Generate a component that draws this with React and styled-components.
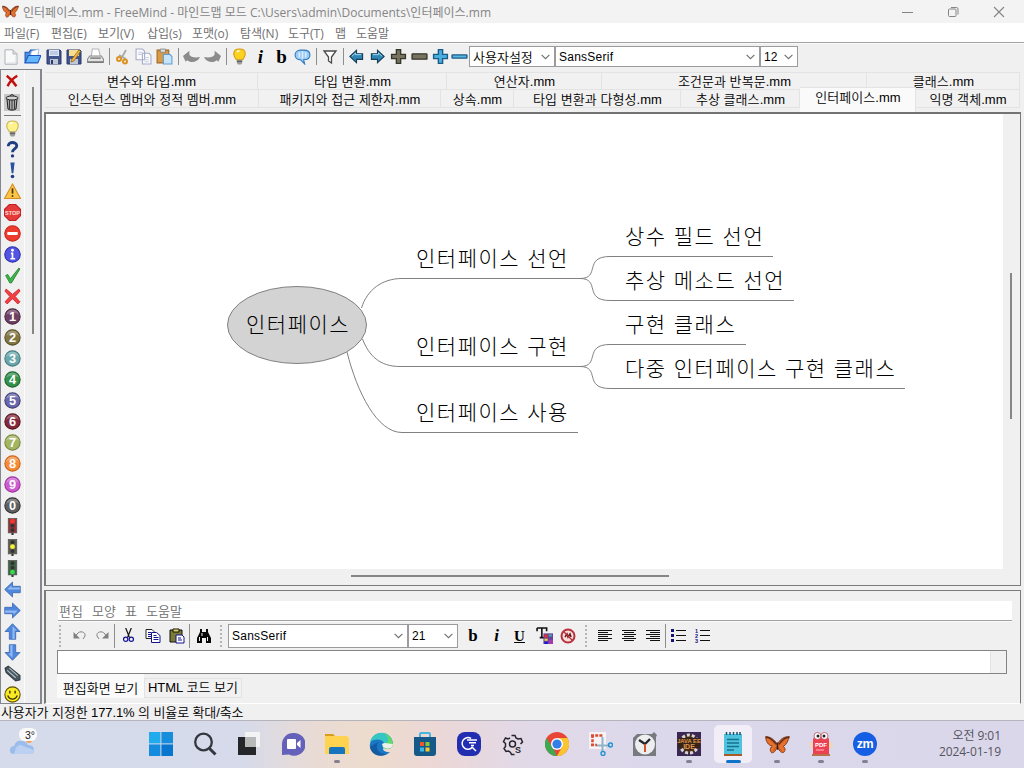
import React from "react";
import styled, { createGlobalStyle } from "styled-components";

const Global = createGlobalStyle`
  * { box-sizing: border-box; }
  html, body { margin: 0; padding: 0; overflow: hidden; }
  body { font-family: "Liberation Sans", "Noto Sans CJK KR", sans-serif; font-size: 12px; font-weight: 350; color: #000; }
  svg { display: block; flex: none; }
`;

const Window = styled.div`
  width: 1024px; height: 768px; display: flex; flex-direction: column;
  background: #f0f0f0; overflow: hidden; white-space: nowrap;
`;
const TitleBar = styled.header`
  height: 23px; flex: none; display: flex; align-items: center; background: #f3f3f3;
  padding-left: 2px; color: #858585;
`;
const TitleText = styled.span`
  margin-left: 4px; flex: 1; font-family: "Open Sans", "Noto Sans CJK KR", sans-serif; font-weight: 400;
  font-size: 12px; line-height: 20px; letter-spacing: 0.02px; padding-top: 2px;
`;
const WindowButtons = styled.div`
  display: flex; width: 139px; height: 20px; align-items: center;
  svg { width: 46px; }
`;
const MenuBar = styled.nav`
  height: 20px; flex: none; display: flex; align-items: center; background: #fff;
  border-bottom: 1px solid #a2a2a2; padding: 3px 0 0 4px; color: #707070;
  font-family: "Open Sans", "Noto Sans CJK KR", sans-serif; font-weight: 400;
`;
const MenuItem = styled.span`
  width: ${(p) => p.$w}px; line-height: 18px;
`;
const ToolBar = styled.div`
  height: 26px; flex: none; display: flex; align-items: center;
  border-top: 1px solid #fafafa;
`;
const Slot = styled.span`
  width: ${(p) => p.$w || 21}px; height: 21px; display: flex; flex: none; align-items: center; justify-content: center;
`;
const Rule = styled.span`
  width: 1px; height: ${(p) => p.$h || 17}px; background: #8d8d8d; flex: none;
  margin: 0 ${(p) => (p.$m === undefined ? 3 : p.$m)}px;
`;
const Letter = styled.span`
  font: ${(p) => (p.$italic ? "italic " : "")}bold ${(p) => p.$s || 19}px "Liberation Serif", serif;
  line-height: 20px; text-decoration: ${(p) => (p.$u ? "underline" : "none")};
`;
const Combo = styled.span`
  width: ${(p) => p.$w}px; height: ${(p) => p.$h || 21}px; flex: none; display: flex; align-items: center; justify-content: space-between;
  background: #fff; border: 1px solid #9b9b9f; padding: 0 4px 0 3px; margin-right: ${(p) => p.$gap || 0}px;
  letter-spacing: ${(p) => p.$ls || 0}px; font-size: ${(p) => p.$fs || 12}px;
`;
const Body = styled.div`
  height: 635px; flex: none; display: flex;
`;
const Sidebar = styled.aside`
  width: 42px; flex: none; display: flex; border: 1px solid #85878f; border-right-width: 2px; overflow: hidden;
`;
const IconColumn = styled.div`
  width: 24px; flex: none; display: flex; flex-direction: column; align-items: center; border-right: 1px solid #fcfcfc;
  padding: 1px 1px 0 0;
`;
const Mark = styled.span`
  width: 22px; height: 20.96px; flex: none; display: flex; align-items: center; justify-content: center;
`;
const SideRule = styled.span`width: 17px; height: 1px; background: #777; margin: 2px 0; flex: none;`;
const SideThumb = styled.span`width: 2px; height: 247px; margin: 17px 0 0 7px; background: #868686;`;

const Work = styled.main`
  flex: 1; display: flex; flex-direction: column; padding: 3px 3px 0 2px;
`;
const TabRow = styled.div`
  display: flex; height: ${(p) => p.$h}px; flex: none; width: 975px; margin-left: 1px;
`;
const Tab = styled.span`
  width: ${(p) => p.$w}px; height: ${(p) => (p.$on ? 25 : p.$h)}px; flex: none; text-align: center;
  margin-top: ${(p) => (p.$on ? -2 : 0)}px; padding-left: 1px;
  border: solid #e3e3e3; border-width: 1px 1px ${(p) => (p.$bottom ? 1 : 0)}px 0;
  background: ${(p) => (p.$on ? "#fafafa" : "#f1f1f1")};
  line-height: ${(p) => (p.$bottom || p.$on ? 19 : 18)}px; font-size: 13px; letter-spacing: 0.05px;
`;
const MapPane = styled.section`
  height: 474px; flex: none; margin-top: 4px; border: 1px solid #7b7b7b; border-top: 2px solid #737373; border-left-width: 2px;
  display: grid; grid-template: 455px 1fr / 957px 1fr;
`;
const Canvas = styled.div`position: relative; background: #fff; overflow: hidden;`;
const Edges = styled.svg`position: absolute; left: 0; top: 0;`;
const Node = styled.span`
  position: absolute; left: ${(p) => p.$x - 46}px; top: ${(p) => p.$y - 114 - 16}px;
  font: 300 21px/30px "Noto Sans CJK KR", sans-serif; letter-spacing: 1.5px; word-spacing: 1px;
`;
const VBar = styled.div`padding: 159px 0 0 7px;`;
const HBar = styled.div`padding: 6px 0 0 305px;`;
const VThumb = styled.div`width: 2px; height: 146px; background: #868686;`;
const HThumb = styled.div`width: 318px; height: 2px; background: #868686;`;

const NotePane = styled.section`
  height: 114px; margin-top: 4px; flex: none; border: 1px solid #7b7b7b; border-left-width: 2px; border-bottom-color: #fff;
  padding: 10px 8px 0 11px; display: flex; flex-direction: column;
`;
const NoteMenu = styled.div`
  height: 20px; flex: none; display: flex; align-items: center; margin: 0 0 0 1px; padding: 2px 0 0 1px; background: #fff;
  border-bottom: 1px solid #a2a2a2; color: #6e6e6e; font-size: 13px;
`;
const NoteTools = styled.div`height: 29px; flex: none; display: flex; align-items: center; border-top: 1px solid #fafafa; padding-bottom: 1px;`;
const Grip = styled.span`width: 2px; height: 22px; margin: 0 ${(p) => p.$r}px 0 ${(p) => p.$l}px; background: repeating-linear-gradient(#b5b5b5 0 2px, transparent 2px 4px);`;
const NoteField = styled.div`
  height: 24px; width: 950px; flex: none; background: #fff; border: 1px solid #848484; display: flex; justify-content: flex-end;
`;
const FieldEnd = styled.span`width: 16px; border-left: 1px solid #e3e3e3; background: #f0f0f0;`;
const NoteTabs = styled.div`display: flex; height: 24px; flex: none; align-items: flex-start;`;
const NoteTab = styled.span`
  width: ${(p) => p.$w}px; height: ${(p) => (p.$on ? 24 : 20)}px; text-align: center; background: ${(p) => (p.$on ? "#fafafa" : "#f1f1f1")};
  border: ${(p) => (p.$on ? 0 : 1)}px solid #e3e3e3; margin-top: ${(p) => (p.$on ? 0 : 4)}px;
  line-height: ${(p) => (p.$on ? 29 : 18)}px; font-size: 13px; letter-spacing: ${(p) => p.$ls || 0}px;
`;
const Status = styled.div`height: 16px; flex: none; line-height: 18px; padding-left: 1px; font-size: 13px; letter-spacing: -0.1px;`;
const TaskBar = styled.footer`
  height: 48px; flex: none; display: flex; align-items: stretch; border-top: 1px solid #b5b3bb;
  background: linear-gradient(90deg, #d5dbea 0, #d6daea 240px, #e9dbd5 315px, #eddccd 370px, #ecd7d6 435px, #e2d9e7 520px, #dcd8eb 640px, #dbd7ea 1024px);
`;
const Weather = styled.div`width: 139px; padding: 6px 0 0 9px;`;
const TaskButton = styled.div`
  width: 38px; height: 38px; margin: 4px 3px 0; border-radius: 5px; display: flex; flex-direction: column; align-items: center;
  justify-content: space-between; padding-top: 7px; background: ${(p) => (p.$on ? "#f1eef7" : "transparent")};
`;
const Pip = styled.span`
  width: ${(p) => (p.$on ? 15 : 6)}px; height: 3px; border-radius: 2px;
  background: ${(p) => (p.$on ? "#1173c7" : p.$run ? "#85808f" : "transparent")};
`;
const Clock = styled.div`
  flex: 1; padding: 7px 23px 0 0; text-align: right; color: #55545e; font-family: "Open Sans", "Noto Sans CJK KR", sans-serif; font-weight: 400;
  font-size: 12px; line-height: 16px; letter-spacing: -0.05px; display: flex; flex-direction: column;
`;

const I = ({ s = 16, children, ...r }) => (
  <svg width={s} height={s} viewBox="0 0 16 16" fill="none" {...r}>{children}</svg>
);
const Butterfly = ({ s = 17 }) => (
  <svg width={s} height={s} viewBox="0 0 24 24">
    <path d="M12 12C9 7 4 4 .5 4.500 1 9 3 13 7 13.500c-3 2-2 5.500-.5 6.500 3 0 4-3 5.500-6 1 3 3 6.500 6 5.500 2-2 1.500-4.500-.500-5.500 3.500-2 4.500-6 6-9.500C18.500 4 14 7 12 12Z" fill="#e8702a" stroke="#7c3a1c" strokeWidth=".9" />
    <path d="M1 5c4 0 7 3 10 7M23 5c-4 0-7 3-9.500 7" stroke="#5a2b18" strokeWidth="1.300" fill="none" />
    <path d="M5 7.500 10 12M19 7.500 14 12M8 18l3-4 5 4" stroke="#b14d1b" strokeWidth=".7" fill="none" />
    <path d="M12 10v7" stroke="#3c211a" strokeWidth="1.500" />
  </svg>
);
const Chevron = () => <svg width="9" height="6" viewBox="0 0 9 6" fill="none"><path d="M.6.8 4.5 4.7 8.4.8" stroke="#6f6f6f" strokeWidth="1.1" /></svg>;

const NewFile = () => <I><path d="M2 .8h8l4 4v10.4H2Z" fill="#f9f9f9" stroke="#aab0bb" /><path d="M10 1v4h4" fill="#ddd" stroke="#b4b4ba" /><path d="M4 14h9V7" stroke="#dcdce2" /></I>;
const OpenFile = () => <I s={17}><path d="M1 14V4h4l1-2h7v4" fill="#4d8fe0" stroke="#1d58b8" /><path d="m7 3 7-2-1 6-7 1Z" fill="#fff" stroke="#9bb7dd" strokeWidth=".7" /><path d="M1 14 4 7h12l-3 7Z" fill="#65b6fb" stroke="#1c56c4" /></I>;
const Save = () => <I><path d="M1 1h13l1 1v13H1Z" fill="#41548c" stroke="#2c396a" /><path d="M3 1h10v6H3Z" fill="#dfe6f5" /><path d="M4 3h8M4 5h8" stroke="#9fadd2" /><path d="M4 10h8v5H4Z" fill="#bfc7d6" /><path d="M5 11h2v4H5Z" fill="#303c61" /></I>;
const SaveAs = () => <I><path d="M1 1h13l1 1v13H1Z" fill="#41548c" stroke="#2c396a" /><path d="M3 1h10v6H3Z" fill="#f6dd94" /><path d="M4 10h8v5H4Z" fill="#bfc7d6" /><path d="m13 .8 1.500 1.500L8 12l-3 1 1-3Z" fill="#f4b52c" stroke="#8d6226" strokeWidth=".7" /></I>;
const Printer = () => <I s={17}><path d="m4 8 1-7h6l1.500 7" fill="#fff" stroke="#b5b5b5" /><path d="M2.500 7.500h11l2 3v3H.5v-3Z" fill="#e3e3e3" stroke="#8c8c8c" /><path d="M1 12.500h14v1.500H1Z" fill="#777" /><path d="M3 9.500h10" stroke="#555" /></I>;
const CutGold = () => <I><path d="m11 1-5 9M4 6l7 4" stroke="#aaa9a5" strokeWidth="1.8" /><circle cx="4" cy="10" r="2" stroke="#dc9321" strokeWidth="2" /><circle cx="10" cy="12.5" r="2" stroke="#dc9321" strokeWidth="2" /></I>;
const CopyFile = () => <I s={17}><path d="M1 1h6l2 2v8H1ZM7 5h6l2 2v8H7Z" fill="#fafaff" stroke="#a5abc4" /><path d="M3 4h4M3 6h4M9 9h4M9 11h4M9 13h4" stroke="#c9cfe4" /></I>;
const PasteFile = () => <I s={17}><path d="M1 2h11v12H1Z" fill="#d99a42" stroke="#a26526" /><path d="M4 1h5v3H4Z" fill="#dedede" stroke="#777" strokeWidth=".7" /><path d="M7 6h6l2 2v7H7Z" fill="#c6e5fc" stroke="#659dcc" /></I>;
const Undo = ({ flip }) => <I s={17}><g transform={flip ? "translate(16 1.500) scale(-1 1)" : "translate(0 1.500)"}><path d="M0 6 6 1v3.500C7 7 11 8 16 7c-2 5-9 6-12 3L2.500 11.500Z" fill="#8b8b8b" /></g></I>;
const Bulb = ({ s = 17, pale }) => <I s={s}><path d="M5 11C4 9 2.6 8 2.6 5.6 2.6 2.5 5 1 8 1s5.4 1.500 5.400 4.600C13.400 8 12 9 11 11Z" fill={pale ? "#fff18b" : "#fbd222"} stroke={pale ? "#c5b55a" : "#d89a0a"} /><path d="M6 4c0-1 1-1.500 2-1.500" stroke="#fff" strokeWidth="1.400" /><path d="M5.500 11h5v3l-1 1.500h-3l-1-1.500Z" fill="#9a9a96" /><path d="M5.500 12.500h5" stroke="#555" /></I>;
const Bubble = () => <I s={17}><path d="M6 2C3 2 1 4 1 6.500S3 11 6 11l4 4-1-4c4 0 6-2 6-4.500S13 2 9 2Z" fill="#9ccbf5" stroke="#3178bd" /><path d="M5 4v5M8 3v7M11 4v5" stroke="#d8edff" strokeWidth="1.500" /></I>;
const Funnel = () => <I><path d="M2 2h12L9.500 8v6L6.500 12V8Z" fill="#fff" stroke="#4a4a4a" strokeWidth="1.300" /></I>;
const Arrow = ({ flip }) => <I s={15}><g transform={flip ? "translate(16 0) scale(-1 1)" : undefined}><path d="M1 8 8 1.500V5h6.500v6H8v3.500Z" fill="#2e86b5" stroke="#173e57" strokeWidth="1.200" /><path d="M3 7.800 7 4.200V6h6" stroke="#a9dcf4" /></g></I>;
const Plus = ({ c, e }) => <I s={17}><path d="M6 1.500h4V6h4.500v4H10v4.500H6V10H1.500V6H6Z" fill={c} stroke={e} strokeWidth="1.300" /></I>;
const Minus = ({ c, e, h = 4 }) => <I s={17}><rect x="1" y={8 - h / 2} width="14" height={h} rx=".5" fill={c} stroke={e} strokeWidth="1.300" /></I>;

const RedX = ({ s = 14, soft }) => <I s={s}><path d={soft ? "M2 1 8 6l6-5 1 2-4.500 5 4.500 5-2 2-5-5-5 5-2-2 4.500-5L1 3Z" : "M2 2c4 3 8 7 11 12M14 2C9 5 5 9 3 14"} fill={soft ? "#f04144" : "none"} stroke={soft ? "#cf2029" : "#c2100e"} strokeWidth={soft ? 0.8 : 2.8} /></I>;
const Trash = () => <svg width="16" height="17" viewBox="0 0 16 17"><path fill="#c7c7c7" d="M0 0h16v17H0z" /><path d="m3 5 1 10c2 1.500 6 1.500 8 0l1-10Z" fill="#aaa" stroke="#222" /><path d="M5.500 6v9M8 6v10M10.500 6v9" stroke="#3b3b3b" /><ellipse cx="8" cy="4" rx="6" ry="2" fill="#d5d5d5" stroke="#222" /><path d="M6 2c1-2 3-2 4 0" stroke="#222" fill="none" /></svg>;
const Question = () => <I s={17}><path d="M4 5c0-5 8-4.500 8-.500 0 3-4 3-4 6" stroke="#203f80" strokeWidth="2.700" /><circle cx="8" cy="14" r="1.600" fill="#203f80" /></I>;
const Bang = () => <I s={17}><path d="M6 .5h4L8.800 10.500H7.200Z" fill="#2853a0" /><circle cx="8" cy="13.700" r="1.700" fill="#203f80" /></I>;
const Warning = () => <I s={17}><path d="M8 1 15.500 14.500H.5Z" fill="#fbc645" stroke="#d68d23" /><path d="M8 5v5" stroke="#4b3210" strokeWidth="1.600" /><circle cx="8" cy="12.200" r=".9" fill="#4b3210" /></I>;
const StopSign = () => <I s={17}><path d="M5 .5h6L15.500 5v6L11 15.500H5L.5 11V5Z" fill="#e43a3a" stroke="#c42027" /><text x="8" y="10" textAnchor="middle" fontSize="5.200" fontWeight="bold" fill="#ffe1df">STOP</text></I>;
const NoEntry = () => <I s={17}><circle cx="8" cy="8" r="7.300" fill="#ed3c2d" stroke="#c92720" /><rect x="3" y="6.500" width="10" height="3" rx="1" fill="#fff" /></I>;
const Info = () => <I s={17}><circle cx="8" cy="8" r="7.300" fill="#5354e4" stroke="#2f31a8" /><circle cx="8" cy="4" r="1.300" fill="#fff" /><path d="M6.500 7H8v5M6 12h4.500" stroke="#fff" strokeWidth="1.600" /></I>;
const Check = () => <I s={17}><path d="m1.500 8 2-1L6 11l8-10 1 .8L7 15H5.500Z" fill="#3eb54a" stroke="#248330" strokeWidth=".8" /></I>;
const Ball = ({ n, c, e }) => <I s={17}><circle cx="8" cy="8" r="7.200" fill={c} stroke={e} /><path d="M2 6a6.200 6.200 0 0 1 12 0c-4-2-8-2-12 0Z" fill="#fff" opacity=".25" /><text x="8" y="12.300" textAnchor="middle" fontSize="12" fontWeight="bold" fill="#fff">{n}</text></I>;
const Light = ({ on }) => <I s={17}><rect x="4" y=".5" width="8" height="13.500" fill={on === 0 ? "#93343a" : on === 2 ? "#3f6445" : "#5a5c50"} stroke="#555" strokeWidth=".7" /><path d="M8 14v2" stroke="#333" strokeWidth="2" />{["#f0392f", "#f7f13a", "#35db4b"].map((c, i) => <circle key={c} cx="8" cy={3 + i * 4.2} r={on === i ? 2.3 : 1.8} fill={on === i ? c : "#303331"} />)}</I>;
const BlueArrow = ({ r }) => <I s={17}><g transform={`rotate(${r} 8 8)`}><path d="M.7 8 8 1v4h7.300v6H8v4Z" fill="#4f87dd" stroke="#3c69b4" strokeWidth=".8" /><path d="M7 4v2h8v2H3Z" fill="#a9c9f8" opacity=".75" /></g></I>;
const Clip = () => <I s={17}><path d="m1 3 3-2 11 9v4l-4 1L2 7Z" fill="#495760" stroke="#313b42" /><path d="m3 5 8 7M5 3l8 7" stroke="#b3c2c9" /></I>;
const Smile = () => <I s={17}><circle cx="8" cy="8" r="7.200" fill="#f9e922" stroke="#594e0b" /><path d="M5.500 4.500V7M10.500 4.500V7M3.500 9c2 4.500 7 4.500 9 0" stroke="#372f08" strokeWidth="1.300" /></I>;

const balls = [["1", "#704063", "#4c2742"], ["2", "#837642", "#595027"], ["3", "#6aa8ac", "#447b80"], ["4", "#33914b", "#1d6530"], ["5", "#6767aa", "#42427a"], ["6", "#84293b", "#581420"], ["7", "#a4b561", "#77883b"], ["8", "#f58c3a", "#c96318"], ["9", "#cd5ad0", "#9a359c"], ["0", "#606060", "#333"]];

const SmallUndo = ({ flip }) => <svg width="13" height="9" viewBox="0 0 13 9" fill="none"><g transform={flip ? "translate(13 0) scale(-1 1)" : undefined}><path d="M.5 1v6.500H7Z" fill="#808080" /><path d="m3 5 1-2c3-4 9-2 8 2l-2 3" stroke="#808080" /></g></svg>;
const SmallCut = () => <I s={15}><path d="m5 0 4 10M11 0 7 10" stroke="#111" strokeWidth="1.300" /><circle cx="5" cy="12" r="2.300" stroke="#121296" strokeWidth="1.300" /><circle cx="11" cy="12" r="2.300" stroke="#121296" strokeWidth="1.300" /></I>;
const SmallCopy = () => <I><path d="M1 1.500h6l2 2v7H1Z" fill="#fff" stroke="#222" /><path d="M6.500 4.500h5l3.500 3v7H6.500Z" fill="#fff" stroke="#12128c" /><path d="M3 4.500h3M3 6.500h3M3 8.500h3M8.500 7.500h3M8.500 9.500h5M8.500 11.500h5" stroke="#12128c" /></I>;
const SmallPaste = () => <I><path d="M1 2h12v12H1Z" fill="#7c7b35" stroke="#111" /><path d="M4 1h6v3H4Z" fill="#dcd85d" stroke="#111" /><path d="M7 7h6l2 2v6H7Z" fill="#fff" stroke="#12128c" /><path d="M9 10h3M9 12h4" stroke="#12128c" /></I>;
const Binoculars = () => <I><path d="M4 1h2v3h4V1h2v3l3 6v5h-5v-5H6v5H1v-5l3-6Z" fill="#080808" /><path d="M3.500 9v4M11.500 9v4M6 5v3" stroke="#eee" /></I>;
const TextColor = () => <I s={17}><path d="M1 1h9v3M1 1v3M5.500 1v9M3.500 10h4" stroke="#111" strokeWidth="1.500" /><path fill="#693f9b" d="M7 6h9v10H7z" /><path fill="#e32f32" d="M8 7h3v3H8z" /><path fill="#36aeb0" d="M12 7h3v2h-3z" /><path fill="#e7db3d" d="M8 11h3v2H8z" /><path fill="#1718dc" d="M8 14h3v2H8z" /><path fill="#a33bb3" d="M12 12h4v4h-4z" /></I>;
const NoLink = () => <I><circle cx="8" cy="8" r="6.500" fill="#f7dddd" stroke="#b7303a" strokeWidth="2" /><path d="m5 9 2-3 1 3 2-3 1 3" stroke="#681c20" strokeWidth="1.600" /><path d="m3.500 3.500 9 9" stroke="#b7303a" strokeWidth="1.200" /></I>;
const Align = ({ a }) => <svg width="14" height="12" viewBox="0 0 14 12">{[14, 10, 14, 10, 14, 10].map((w, i) => <rect key={i} x={a === "l" ? 0 : a === "r" ? 14 - w : 7 - w / 2} y={i * 2} width={w} height="1" fill="#111" />)}</svg>;
const List = ({ num }) => <svg width="15" height="15" viewBox="0 0 15 15">{[2, 7, 12].map((y, i) => <g key={y}>{num ? <text x="0" y={y + 2.5} fontSize="5.500" fontWeight="bold" fill="#11117e">{i + 1}</text> : <rect x="0" y={y - 1} width="3" height="3" fill="#11117e" />}<rect x="5" y={y} width="10" height="1" fill="#111" /></g>)}</svg>;

const A = ({ children, s = 24 }) => <svg width={s} height={s} viewBox="0 0 24 24" fill="none">{children}</svg>;
const apps = [
  { i: <A><path d="M0 0h11.400v11.400H0z" fill="#20acec" /><path d="M12.400 0H24v11.400H12.400z" fill="#168edc" /><path d="M0 12.400h11.400V24H0z" fill="#148bdc" /><path d="M12.400 12.400H24V24H12.400z" fill="#0876ce" /></A> },
  { i: <A><circle cx="10.500" cy="10" r="8.300" stroke="#33373e" strokeWidth="2.300" /><path d="m16.500 16.500 6 6" stroke="#33373e" strokeWidth="3" /></A> },
  { i: <A><path d="M8 0h15v15H8z" fill="#f3f3f6" /><path d="M1 5h18v18H1z" fill="#252629" /><path d="M8 5h11v10H8z" fill="#b7b8b8" /></A> },
  { i: <A><path d="M12 1a11.400 11.400 0 1 1-4 21.500L1 23V12A11.200 11.200 0 0 1 12 1Z" fill="#6560b9" /><rect x="6" y="7" width="9" height="10" rx="1" fill="#fff" /><path d="m16 11 3.500-3v8L16 13Z" fill="#fff" /></A> },
  { run: 1, i: <A><path d="M0 2h8l3 3H0Z" fill="#d99b1b" /><path d="M0 4h22l2 2v16H0Z" fill="#ffd24f" /><path d="M4 22v-5q0-2 2-2h12q2 0 2 2v5Z" fill="#1675be" /></A> },
  { i: <A><path d="M2 8A11.500 11.500 0 0 1 24 11c0 5-4 7-9 5-3 1 1 5 6 4-3 3-8 5-13 3-5-2-8-7-7-11Z" fill="#1878c6" /><path d="M1 10C4-1 17-2 22 6c3 5 1 11-6 10-5-1 0-3-1-5-1-4-9-5-14-1Z" fill="#36c6c3" /><path d="M15 1c5 2 9 6 9 11-1 5-6 6-9 4-2-1-1-2 0-4 6-1 5-7 0-11Z" fill="#60d86b" /><path d="M9 10c-3 6 0 12 8 12-7 4-15 0-16-7Z" fill="#145ba1" /><path d="M13 12c3-2 6 0 11 0-1 6-7 5-10 3Z" fill="#edf0e9" /></A> },
  { i: <A><path d="M7 6V2q0-1 1-1h8q1 0 1 1v4" stroke="#48b5dd" strokeWidth="2" /><path d="M1 5h22v16q0 3-3 3H4q-3 0-3-3Z" fill="#165888" /><path d="M7 10h4v4H7z" fill="#f4542f" /><path d="M12.500 10h4v4h-4z" fill="#83c83b" /><path d="M7 15.500h4v4H7z" fill="#36b8ef" /><path d="M12.500 15.500h4v4h-4z" fill="#ffc426" /></A> },
  { i: <A><rect width="24" height="24" rx="8" fill="#222eb1" /><path d="M14 6.500a5.800 5.800 0 1 0 1.500 8.500m-.5 0 4 4M10 8h10M12 10.700h7M14 13.400h3" stroke="#fff" strokeWidth="1.500" /></A> },
  { i: <A><path d="M10.500 3.500h3.500l1 2.500 2 1 3-.5 1.500 3.500-2 2M9 6 7 7 4.500 6 2.500 9.500l2 2v3l-1.500 2 2 3 2.500-.5 2 1.500 1 2h3" stroke="#24262d" strokeWidth="1.500" /><circle cx="11.500" cy="12" r="3" stroke="#24262d" strokeWidth="1.500" /><text x="14" y="21" fontSize="9" fontWeight="bold" fill="#24262d">S</text></A> },
  { i: <A><circle cx="12" cy="12" r="12" fill="#e94537" /><path d="M1.600 6 9 18l3 6A12 12 0 0 1 1.600 6Z" fill="#3ea853" /><path d="M12 6h10.400A12 12 0 0 1 12 24l5-9Z" fill="#f9c632" /><circle cx="12" cy="12" r="6" fill="#fff" /><circle cx="12" cy="12" r="4.600" fill="#347ee9" /></A> },
  { i: <A><path d="M0 0h17v17H0z" fill="#f5f3f5" /><path d="M2 3.500h12M3.500 3v11M2 13h6" stroke="#db4c31" strokeWidth="2.500" strokeDasharray="3 1.200" /><path d="M13.500 5v15M8 13.500h13" stroke="#8fb4c9" strokeWidth="2" /><circle cx="21.500" cy="13" r="2" stroke="#2292d0" strokeWidth="1.400" /><circle cx="14" cy="21.500" r="2" stroke="#2292d0" strokeWidth="1.400" /></A> },
  { i: <A><path d="M4 2h15l2-2 3 3-1 2v19H0V6Z" fill="#777a7e" /><circle cx="12" cy="12.500" r="10" fill="#eeeeef" /><path d="m6 8 6 4 5-5" stroke="#252629" strokeWidth="2.400" /><path d="M12 12v8" stroke="#d35425" strokeWidth="2" /></A> },
  { run: 1, i: <A><path fill="#3b2852" d="M0 0h24v24H0z" /><circle cx="12" cy="12" r="9" fill="#442819" stroke="#d8d5d1" strokeWidth="3" strokeDasharray="3 2" /><path fill="#362517" d="M1 6h22v10H1z" /><text x="12" y="11" textAnchor="middle" fontSize="5.800" fontWeight="bold" fill="#e1964d">JAVA EE</text><text x="12" y="17" textAnchor="middle" fontSize="7" fontWeight="bold" fill="#e1964d">IDE</text></A> },
  { run: 1, on: 1, i: <A><path d="M3 2h18v20H3z" fill="#4ec3dd" /><path d="M3 22h18v2H3z" fill="#a95b25" /><path d="M6 7.500h12M6 11h12M6 14.500h12M6 18h7" stroke="#17718f" strokeWidth="1.500" /><path d="M5.500 0v3M9 0v3M12.500 0v3M16 0v3M19 0v3" stroke="#17566c" strokeWidth="1.500" /></A> },
  { run: 1, i: <Butterfly s={25} /> },
  { run: 1, i: <A><ellipse cx="3.500" cy="13" rx="3.200" ry="3.500" fill="#efd6bb" /><ellipse cx="20.500" cy="13" rx="3.200" ry="3.500" fill="#efd6bb" /><path d="M4 8q0-3 3-3h10q3 0 3 3v14H4Z" fill="#eb4153" /><circle cx="8.500" cy="4" r="3.500" fill="#fff" stroke="#b13a45" strokeWidth=".7" /><circle cx="15.500" cy="4" r="3.500" fill="#fff" stroke="#b13a45" strokeWidth=".7" /><circle cx="9" cy="4" r="1.500" fill="#222" /><circle cx="15" cy="4" r="1.500" fill="#222" /><text x="12" y="15" textAnchor="middle" fontSize="6" fontWeight="bold" fill="#fff">PDF</text><path d="M7 18h8" stroke="#ffb9bb" /><path d="M3 22h18v2H3z" fill="#bb7146" /></A> },
  { run: 1, i: <A><circle cx="12" cy="12" r="12" fill="#165ee3" /><text x="12" y="16" textAnchor="middle" fontSize="12.500" fontWeight="bold" fill="#fff" letterSpacing="-.4">zm</text></A> },
];

const nodes = [
  ["인터페이스", 246, 324], ["인터페이스 선언", 416, 258], ["인터페이스 구현", 416, 346], ["인터페이스 사용", 416, 412],
  ["상수 필드 선언", 625, 236], ["추상 메소드 선언", 625, 280], ["구현 클래스", 625, 324], ["다중 인터페이스 구현 클래스", 625, 368],
];

export default function App() {
  return (
    <Window>
      <Global />
      <TitleBar>
        <Butterfly />
        <TitleText>인터페이스.mm - FreeMind - 마인드맵 모드 C:\Users\admin\Documents\인터페이스.mm</TitleText>
        <WindowButtons>
          <svg height="12" viewBox="0 0 46 12"><path d="M17 6.500h11" stroke="#858585" /></svg>
          <svg height="12" viewBox="0 0 46 12" fill="none"><rect x="17.500" y="3" width="7.500" height="7.500" rx="1" stroke="#858585" /><path d="M20 1.500h5.500q1.500 0 1.500 1.500v5.500" stroke="#858585" /></svg>
          <svg height="12" viewBox="0 0 46 12"><path d="m17 1 10 10M27 1 17 11" stroke="#858585" strokeWidth="1.100" /></svg>
        </WindowButtons>
      </TitleBar>
      <MenuBar>
        {[["파일(F)", 47], ["편집(E)", 47], ["보기(V)", 49], ["삽입(s)", 45], ["포맷(o)", 48], ["탐색(N)", 48], ["도구(T)", 47], ["맵", 21], ["도움말", 50]].map(([t, w]) => <MenuItem key={t} $w={w}>{t}</MenuItem>)}
      </MenuBar>
      <ToolBar>
        <Slot><NewFile /></Slot><Slot $w={22}><OpenFile /></Slot><Slot><Save /></Slot><Slot $w={20}><SaveAs /></Slot><Slot $w={22}><Printer /></Slot>
        <Rule $m={2.5} /><Slot><CutGold /></Slot><Slot><CopyFile /></Slot><Slot><PasteFile /></Slot>
        <Rule $m={2.5} /><Slot><Undo /></Slot><Slot><Undo flip /></Slot>
        <Rule $m={2.5} /><Slot><Bulb /></Slot><Slot><Letter $italic>i</Letter></Slot><Slot><Letter>b</Letter></Slot><Slot><Bubble /></Slot>
        <Rule $m={2.5} /><Slot><Funnel /></Slot>
        <Rule $m={2.5} /><Slot><Arrow /></Slot><Slot><Arrow flip /></Slot>
        <Slot><Plus c="#77735f" e="#37362a" /></Slot><Slot><Minus c="#77735f" e="#37362a" h={5} /></Slot><Slot $w={20}><Plus c="#48aede" e="#1b5b87" /></Slot><Slot $w={19}><Minus c="#58b6df" e="#1b5b87" h={3} /></Slot>
        <Combo $w={86} $fs={13}>사용자설정<Chevron /></Combo><Combo $w={205} $ls={0.25}>SansSerif<Chevron /></Combo><Combo $w={38}>12<Chevron /></Combo>
      </ToolBar>
      <Body>
        <Sidebar>
          <IconColumn>
            <Mark><RedX /></Mark><Mark><Trash /></Mark><SideRule />
            {[<Bulb pale />, <Question />, <Bang />, <Warning />, <StopSign />, <NoEntry />, <Info />, <Check />, <RedX s={17} soft />, ...balls.map(([n, c, e]) => <Ball n={n} c={c} e={e} />), <Light on={0} />, <Light on={1} />, <Light on={2} />, <BlueArrow r={0} />, <BlueArrow r={180} />, <BlueArrow r={90} />, <BlueArrow r={-90} />, <Clip />, <Smile />].map((x, i) => <Mark key={i}>{x}</Mark>)}
          </IconColumn>
          <SideThumb />
        </Sidebar>
        <Work>
          <TabRow $h={17}>
            {[["변수와 타입.mm", 213], ["타입 변환.mm", 189], ["연산자.mm", 155], ["조건문과 반복문.mm", 265], ["클래스.mm", 153]].map(([t, w]) => <Tab key={t} $w={w} $h={17}>{t}</Tab>)}
          </TabRow>
          <TabRow $h={19}>
            {[["인스턴스 멤버와 정적 멤버.mm", 214], ["패키지와 접근 제한자.mm", 182], ["상속.mm", 73], ["타입 변환과 다형성.mm", 167], ["추상 클래스.mm", 119], ["인터페이스.mm", 116, 1], ["익명 객체.mm", 104]].map(([t, w, on]) => <Tab key={t} $w={w} $h={19} $on={on} $bottom={!on}>{t}</Tab>)}
          </TabRow>
          <MapPane>
            <Canvas>
              <Edges width="957" height="455" viewBox="46 114 957 455" fill="none" stroke="#808080">
                <path d="M361.500 308C367 290 382 278.500 402 278.500H580M362.500 339C369 356 380 366.500 400 366.500H580M347 352C357 392 377 432.500 402 432.500H578" />
                <path d="M580 278.500C601 278.500 583 256.500 610 256.500H773M580 278.500C601 278.500 583 300.500 610 300.500H794M580 366.500C601 366.500 583 344.500 610 344.500H746M580 366.500C601 366.500 583 388.500 610 388.500H905" />
                <ellipse cx="297" cy="325" rx="69.500" ry="38.500" fill="#d3d3d3" />
              </Edges>
              {nodes.map(([t, x, y]) => <Node key={t} $x={x} $y={y}>{t}</Node>)}
            </Canvas>
            <VBar><VThumb /></VBar>
            <HBar><HThumb /></HBar>
          </MapPane>
          <NotePane>
            <NoteMenu>{[["편집", 33], ["모양", 33], ["표", 21], ["도움말", 50]].map(([t, w]) => <MenuItem key={t} $w={w}>{t}</MenuItem>)}</NoteMenu>
            <NoteTools>
              <Grip $l={2} $r={6} /><Slot $w={24}><SmallUndo /></Slot><Slot $w={23}><SmallUndo flip /></Slot><Rule $h={24} $m={0} />
              <Slot $w={27}><SmallCut /></Slot><Slot $w={22}><SmallCopy /></Slot><Slot $w={25}><SmallPaste /></Slot><Rule $h={24} $m={0} />
              <Slot $w={27}><Binoculars /></Slot><Grip $l={3} $r={6} />
              <Combo $w={180} $h={24} $ls={0.25}>SansSerif<Chevron /></Combo><Combo $w={50} $h={24} $gap={3}>21<Chevron /></Combo>
              <Slot $w={24}><Letter $s={17}>b</Letter></Slot><Slot $w={23}><Letter $s={17} $italic>i</Letter></Slot><Slot $w={23}><Letter $s={15} $u>U</Letter></Slot><Slot $w={26}><TextColor /></Slot><Slot $w={22}><NoLink /></Slot>
              <Grip $l={6} $r={6} /><Slot $w={24}><Align a="l" /></Slot><Slot $w={24}><Align a="c" /></Slot><Slot $w={24}><Align a="r" /></Slot><Rule $h={24} $m={0} />
              <Slot $w={25}><List /></Slot><Slot $w={23}><List num /></Slot>
            </NoteTools>
            <NoteField><FieldEnd /></NoteField>
            <NoteTabs><NoteTab $w={87} $on>편집화면 보기</NoteTab><NoteTab $w={98} $ls={0.02}>HTML 코드 보기</NoteTab></NoteTabs>
          </NotePane>
        </Work>
      </Body>
      <Status>사용자가 지정한 177.1% 의 비율로 확대/축소</Status>
      <TaskBar>
        <Weather>
          <svg width="32" height="30" viewBox="0 0 32 30"><path d="M5 27q-5 0-4-5 1-3 4-3Q7 13 13 14q4 0 6 4 6 0 6 5 0 4-4 4Z" fill="#9cbdeb" /><path d="M7 21q3-5 7-2 5 2 11 4-1 4-4 4H5Z" fill="#bcd1f2" /><circle cx="20" cy="13" r="3" fill="#f3a05d" /><rect x="10" y="1" width="18" height="13" rx="6" fill="#fafafa" /><text x="16" y="11.500" fontSize="10.500" fill="#222">3°</text></svg>
        </Weather>
        {apps.map((a, i) => <TaskButton key={i} $on={a.on}>{a.i}<Pip $on={a.on} $run={a.run} /></TaskButton>)}
        <Clock><span>오전 9:01</span><span>2024-01-19</span></Clock>
      </TaskBar>
    </Window>
  );
}
